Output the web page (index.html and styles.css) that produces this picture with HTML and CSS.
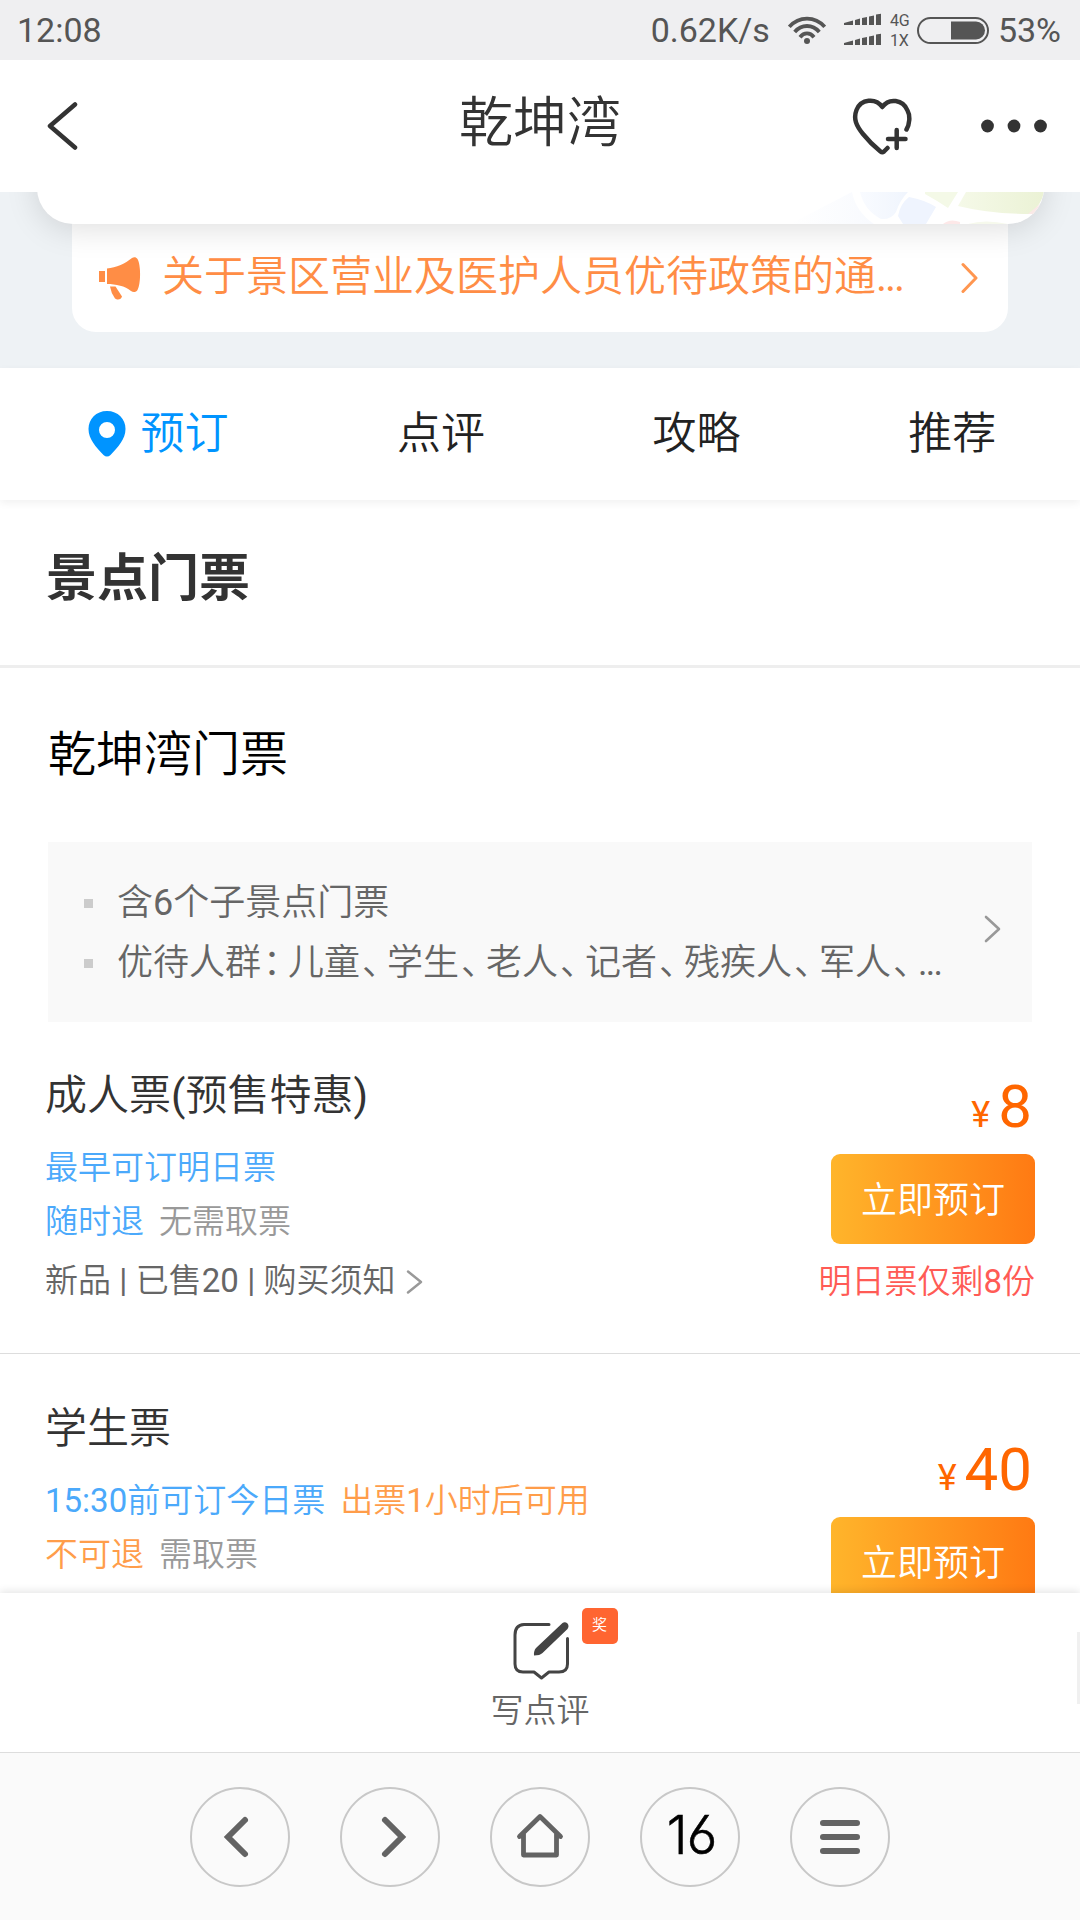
FILE: index.html
```html
<!DOCTYPE html>
<html lang="zh-CN">
<head>
<meta charset="utf-8">
<title>乾坤湾</title>
<link rel="stylesheet" href="styles.css">
</head>
<body>
<div class="page">
  <div class="status">
    <span class="status-time">12:08</span>
    <span class="status-speed">0.62K/s</span>
    <svg class="wifi" width="38" height="28" viewBox="0 0 38 28" fill="none" stroke="#555" stroke-width="3.8">
      <path d="M1.3 10.8C11-.2 27-.2 36.700 10.800"/>
      <path d="M6.700 16C13.500 8 24.500 8 31.300 16"/>
      <path d="M12 21.200C16 16.200 22 16.200 26 21.200"/>
      <circle cx="19" cy="25" r="3" fill="#555" stroke="none"/>
    </svg>
    <svg class="signal" width="38" height="32" viewBox="0 0 38 32" fill="#555">
      <path id="bars" d="M0 12V10L9 7.500V12ZM11 12V7L16 5.500V12ZM18 12V5L23 4V12ZM25 12V3.500L30 2.500V12ZM32 12V1.500L37 .8V12Z"/>
      <use href="#bars" y="20"/>
    </svg>
    <span class="net"><span>4G</span><span>1X</span></span>
    <svg class="battery" width="72" height="27" viewBox="0 0 72 27">
      <rect x="1" y="1" width="70" height="25" rx="12.500" fill="none" stroke="#555" stroke-width="2"/>
      <path d="M34 4.500H59A9 9 0 0 1 59 22.500H34Z" fill="#555"/>
    </svg>
    <span class="status-pct">53%</span>
  </div>

  <header class="header">
    <svg class="back" width="32" height="50" viewBox="0 0 32 50" fill="none" stroke="#333" stroke-width="4.500" stroke-linecap="round" stroke-linejoin="round"><path d="M28 3.500L3 25L28 46.500"/></svg>
    <h1 class="title">乾坤湾</h1>
    <div class="actions">
      <svg class="heart" width="60" height="58" viewBox="0 0 60 58" fill="none" stroke="#333" stroke-width="4.500" stroke-linecap="round" stroke-linejoin="round">
        <path d="M54.500 31.500C57.500 26.500 58.500 18 55.500 12.500C51 1.500 37-.5 30.300 9C23.500-.5 9 1 4.500 12C1 21 4.500 28 11 36C17 43.500 23 49 28.500 53.500Q30.300 55 32 53.500L35.500 50"/>
        <path d="M36 41H53.500M44.700 32V50"/>
      </svg>
      <svg width="66" height="14" viewBox="0 0 66 14" fill="#333"><circle cx="6.500" cy="7" r="6.400"/><circle cx="33" cy="7" r="6.400"/><circle cx="59.500" cy="7" r="6.400"/></svg>
    </div>
  </header>

  <section class="hero">
    <div class="map-card">
      <svg width="300" height="32" viewBox="744 0 300 32">
        <defs>
          <linearGradient id="haze" x1="0" y1="0" x2="1" y2="0"><stop offset="0" stop-color="#fff"/><stop offset="1" stop-color="#f8fafe"/></linearGradient>
          <linearGradient id="lake" x1="0" y1="0" x2="1" y2="0"><stop offset="0" stop-color="#f9fbff"/><stop offset="1" stop-color="#f0f5fd"/></linearGradient>
          <linearGradient id="park" x1="0" y1="0" x2="1" y2="0"><stop offset="0" stop-color="#f5f9e8"/><stop offset="1" stop-color="#ebf2d5"/></linearGradient>
        </defs>
        <path d="M790 32L852 0Q856 20 874 32Z" fill="url(#haze)"/>
        <path d="M860 0H908Q900 8 896 20Q891 28 881 27Q864 18 860 0Z" fill="url(#lake)"/>
        <path d="M909 5Q925 8 936 15L926 32H903L898 24Q900 12 909 5Z" fill="#eff4fe"/>
        <path d="M925 0H958L948 16Q936 8 925 2Z" fill="#f4f9e7"/>
        <path d="M966 0H1044Q1042 12 1030 22Q990 22 958 14Z" fill="url(#park)"/>
        <path d="M1028 22L1040 12V22Z" fill="#fae9e7"/>
        <path d="M943 32Q950 26 960 30V32Z" fill="#fde8e8"/>
        <path d="M968 32Q985 27 1008 32Z" fill="#f6f9ec"/>
      </svg>
    </div>
    <div class="notice">
      <svg class="horn" width="42" height="44" viewBox="0 0 42 44" fill="#ff8d45">
        <rect x="0" y="14" width="6" height="11"/>
        <path d="M8 11.500C17 11 27 6 33 1C35 0 37 0 38.500 2C42 8 42 27 38.500 33C37 35.500 34 35.500 32 34C26 29 17 27 8 27Z"/>
        <path d="M11 29.500H16.500L23 39.500Q22 43 18 42.500L16 41.500Q12 36 11 29.500Z"/>
      </svg>
      <span class="notice-text">关于景区营业及医护人员优待政策的通<span class="num dots">...</span></span>
      <svg class="notice-go" width="18" height="32" viewBox="0 0 18 32" fill="none" stroke="#ff9650" stroke-width="3" stroke-linecap="round" stroke-linejoin="round"><path d="M2 2.500L15 16L2 29.500"/></svg>
    </div>
  </section>

  <nav class="tabs">
    <a class="tab tab-on"><svg width="38" height="46" viewBox="0 0 38 46" fill="#0094ff"><path fill-rule="evenodd" d="M19 0C8 0 .5 8 .5 18C.5 28 8 36 15.500 44Q19 47 22.500 44C30 36 37.500 28 37.500 18C37.500 8 30 0 19 0ZM19 11A8 8 0 1 1 19 27A8 8 0 0 1 19 11Z"/></svg><span>预订</span></a>
    <a class="tab">点评</a>
    <a class="tab">攻略</a>
    <a class="tab">推荐</a>
  </nav>

  <main class="content">
    <h2 class="section-title">景点门票</h2>
    <h3 class="group-title">乾坤湾门票</h3>
    <div class="info">
      <ul class="info-list">
        <li>含<span class="num">6</span>个子景点门票</li>
        <li>优待人群<i>：</i>儿童<i>、</i>学生<i>、</i>老人<i>、</i>记者<i>、</i>残疾人<i>、</i>军人<i>、</i><span class="num dots">...</span></li>
      </ul>
      <svg width="17" height="28" viewBox="0 0 17 28" fill="none" stroke="#999" stroke-width="2.600" stroke-linecap="round" stroke-linejoin="round"><path d="M2 2L15 14L2 26"/></svg>
    </div>

    <article class="ticket">
      <div class="detail">
        <h4 class="name">成人票<span class="num">(</span>预售特惠<span class="num">)</span></h4>
        <p class="tags"><span class="blue">最早可订明日票</span></p>
        <p class="tags"><span class="blue">随时退</span><span class="grey">无需取票</span></p>
        <p class="meta"><span>新品 <span class="num">|</span> 已售<span class="num">20</span> <span class="num">|</span> 购买须知</span><svg width="17" height="26" viewBox="0 0 17 26" fill="none" stroke="#999" stroke-width="2.400" stroke-linecap="round" stroke-linejoin="round"><path d="M2 2.500L15 13L2 23.500"/></svg></p>
      </div>
      <div class="buy">
        <div class="price"><small>¥</small>8</div>
        <button class="book">立即预订</button>
        <div class="left">明日票仅剩<span class="num">8</span>份</div>
      </div>
    </article>

    <article class="ticket ticket-next">
      <div class="detail">
        <h4 class="name">学生票</h4>
        <p class="tags"><span class="blue"><span class="num">15:30</span>前可订今日票</span><span class="orange">出票<span class="num">1</span>小时后可用</span></p>
        <p class="tags"><span class="orange">不可退</span><span class="grey">需取票</span></p>
      </div>
      <div class="buy">
        <div class="price"><small>¥</small>40</div>
        <button class="book">立即预订</button>
      </div>
    </article>
  </main>

  <footer class="review">
    <div class="review-btn">
      <svg class="pen" width="58" height="60" viewBox="0 0 58 60" fill="none" stroke="#444" stroke-width="3" stroke-linecap="round" stroke-linejoin="round">
        <path d="M36 3.500H11Q2 4 2 14V43Q2 51 10 51H21L28.500 57L36 51H46Q54.500 51 54.500 43V17.500"/>
        <path d="M49.500 2Q52 .5 54.500 2.500Q56.500 5 54.500 8L29.500 32Q27 34.500 21 34.500Q20.500 30 23 27Z" fill="#444" stroke="none"/>
      </svg>
      <span class="review-label">写点评</span>
      <span class="badge">奖</span>
    </div>
  </footer>

  <nav class="browser">
    <a class="round"><svg width="40" height="44" viewBox="0 0 40 44" fill="none" stroke="#636363" stroke-width="6" stroke-linecap="round"><path d="M25 5L8 22L25 39"/></svg></a>
    <a class="round"><svg width="40" height="44" viewBox="0 0 40 44" fill="none" stroke="#636363" stroke-width="6" stroke-linecap="round"><path d="M15 5L32 22L15 39"/></svg></a>
    <a class="round"><svg width="48" height="48" viewBox="0 0 48 48" fill="none" stroke="#636363" stroke-width="4.800" stroke-linecap="round" stroke-linejoin="round"><path d="M3.500 23.500L24 3.500L44.500 23.500M7.500 21V42H40.500V21"/></svg></a>
    <a class="round"><span class="count">16</span></a>
    <a class="round"><svg width="40" height="36" viewBox="0 0 40 36" fill="#636363"><rect y="1" width="40" height="6" rx="3"/><rect y="15" width="40" height="6" rx="3"/><rect y="29" width="40" height="6" rx="3"/></svg></a>
  </nav>
</div>
</body>
</html>
```
FILE: styles.css
```css
* { box-sizing: border-box; margin: 0; padding: 0; }
body {
  background: #fff;
  font-family: Roboto, "Noto Sans CJK SC", sans-serif;
  font-weight: 350;
  color: #333;
}
svg { display: block; flex: none; }
i { font-style: normal; }
.num { font-weight: 400; }
.dots { letter-spacing: -.05em; }
.page { width: 1080px; height: 1920px; overflow: hidden; display: flex; flex-direction: column; }
.page > * { flex: none; }

.status {
  height: 60px; background: #efeff1; color: #555;
  display: flex; align-items: flex-start; padding: 0 19px 0 17px;
  font-size: 34px; line-height: 60px; font-weight: 400;
}
.status-speed { margin-left: auto; }
.wifi { margin: 16px 0 0 18px; }
.signal { margin: 13px 0 0 18px; }
.net { display: flex; flex-direction: column; font-size: 16px; line-height: 20px; padding-top: 11px; margin-left: 8px; width: 27px; }
.battery { margin-top: 17px; }
.status-pct { margin-left: 9px; }

.header {
  height: 132px; background: #fff; position: relative; z-index: 3;
  display: grid; grid-template-columns: 1fr 200px 1fr; align-items: center; padding: 0 33px;
}
.back { margin-left: 14px; }
.title { font-size: 54px; line-height: 64px; font-weight: 350; margin-top: -5px; white-space: nowrap; justify-self: center; }
.actions { display: flex; justify-content: flex-end; align-items: center; gap: 69px; }
.heart { margin-top: 2px; }

.hero { height: 176px; background: #eef2f5; }
.map-card {
  width: 1007px; height: 132px; margin: -100px auto 0; background: #fff; border-radius: 36px;
  overflow: hidden; position: relative; z-index: 2; display: flex; justify-content: flex-end; align-items: flex-end;
  box-shadow: 0 5px 32px rgba(0, 0, 0, .13);
}
.notice {
  height: 108px; margin: 0 72px; padding: 0 29px 0 27px; background: #fff; border-radius: 0 0 24px 24px;
  display: flex; align-items: center; color: #ff8d45; font-size: 42px; line-height: 48px;
}
.horn { margin-top: 2px; }
.notice-text { margin: -3px 0 0 21px; white-space: nowrap; }
.notice-go { margin-left: auto; }

.tabs {
  height: 132px; background: #fff; display: flex; position: relative; z-index: 2;
  font-size: 44px; line-height: 133px; color: #222; box-shadow: 0 3px 8px rgba(0, 0, 0, .06);
}
.tab { width: 255.600px; text-align: center; }
.tab-on { flex: 1; display: flex; align-items: center; justify-content: center; gap: 15px; padding-left: 3px; color: #0094ff; }

.content { height: 1093px; overflow: hidden; }
.section-title { height: 168px; border-bottom: 3px solid #eee; padding: 47px 46px 0; font-size: 51px; line-height: 64px; font-weight: 700; }
.group-title { height: 174px; padding: 55px 48px 0; font-size: 48px; line-height: 64px; font-weight: 350; color: #000; }
.info {
  height: 180px; margin: 0 48px; padding: 0 31px 0 36px; background: #f9f9f9; color: #666;
  display: flex; align-items: center; justify-content: space-between;
}
.info svg { margin-top: -6px; }
.info-list { list-style: none; font-size: 36px; line-height: 60px; white-space: nowrap; padding-top: 1px; }
.info-list li { display: flex; align-items: center; }
.info-list li::before { content: ""; width: 9px; height: 9px; margin: 1px 24px 0 0; background: #ccc; }
.info-list i { width: 27px; padding-left: 2px; font-feature-settings: "halt"; }

.ticket { height: 332px; padding: 43px 45px 0 45px; display: flex; justify-content: space-between; border-bottom: 1px solid #ddd; }
.name { font-size: 42px; line-height: 62px; font-weight: 350; margin-bottom: 14px; }
.tags { font-size: 33px; line-height: 54px; display: flex; gap: 15px; white-space: nowrap; }
.blue { color: #4ba9fb; }
.orange { color: #ff9d4a; }
.grey { color: #999; }
.meta { font-size: 33px; line-height: 54px; color: #666; display: flex; align-items: center; margin-top: 5px; word-spacing: .3px; }
.meta svg { margin: 1px 0 0 10px; }
.buy { display: flex; flex-direction: column; align-items: flex-end; padding-top: 11px; }
.price { color: #f60; font-size: 60px; line-height: 62px; font-weight: 400; margin-right: 3px; }
.price small { font-size: 36px; margin-right: 8px; }
.book {
  width: 204px; height: 90px; margin-top: 8px; border: 0; border-radius: 9px; color: #fff;
  background: linear-gradient(90deg, #ffb52b, #ff7a13); font: inherit; font-size: 36px; line-height: 92px; padding-top: 1px;
}
.left { color: #ff5b55; font-size: 33px; line-height: 54px; margin-top: 11px; }
.ticket-next { border: 0; padding-top: 44px; }
.ticket-next .buy { padding-top: 41px; }

.review {
  height: 159px; background: #fff; position: relative; z-index: 3; display: flex; justify-content: center;
  box-shadow: 0 -2px 8px rgba(0, 0, 0, .1);
}
.review::after { content: ""; position: absolute; right: 0; top: 39px; width: 3px; height: 72px; background: #f0f0f0; }
.review-btn { position: relative; display: flex; flex-direction: column; align-items: center; padding-top: 28px; }
.pen { margin-left: 3px; }
.review-label { font-size: 33px; line-height: 40px; color: #666; margin-top: 10px; }
.badge {
  position: absolute; left: 91px; top: 15px; width: 36px; height: 36px; border-radius: 5px;
  background: #ff6531; color: #fff; font-size: 15px; line-height: 34px; text-align: center;
}

.browser {
  height: 168px; background: #fafafa; border-top: 1px solid #ddd; position: relative; z-index: 4;
  display: flex; justify-content: center; align-items: center; gap: 50px;
}
.round { width: 100px; height: 100px; border: 2px solid #c8c8c8; border-radius: 50%; display: flex; align-items: center; justify-content: center; }
.count {
  font-family: Inter, sans-serif; font-feature-settings: "cv03", "ss01"; font-size: 53px; line-height: 60px; font-weight: 350;
  color: #000; margin: -3px 0 0 3px; letter-spacing: -1px; -webkit-text-stroke: .5px #000;
}
```
